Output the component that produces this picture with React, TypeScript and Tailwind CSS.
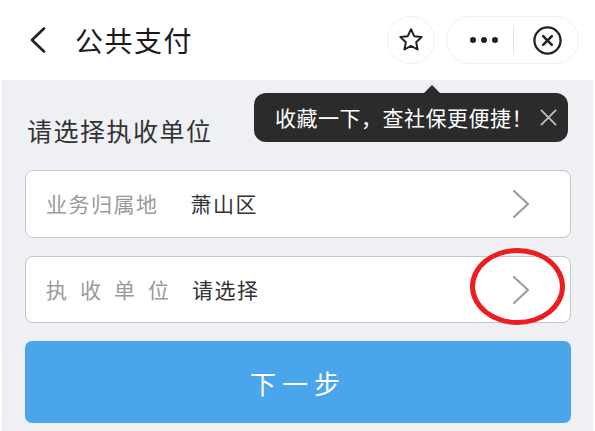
const CJK = "font-['Noto_Sans_CJK_SC','Noto_Sans',sans-serif]";

function Chevron({ className }: { className?: string }) {
  return (
    <svg viewBox="0 0 18 30" className={className} fill="none">
      <polyline points="2,2 16,15 2,28" stroke="currentColor" strokeWidth="2.2" strokeLinecap="round" strokeLinejoin="round" />
    </svg>
  );
}

export default function App() {
  return (
    <div className={`relative w-[595px] h-[431px] bg-white overflow-hidden flex flex-col ${CJK}`}>
      {/* top bar */}
      <header className="h-[80px] flex items-center shrink-0">
        <svg viewBox="0 0 16 26" className="ml-[30px] w-[16px] h-[26px] text-[#222]" fill="none">
          <polyline points="14,1.5 2,13 14,24.5" stroke="currentColor" strokeWidth="2.6" strokeLinecap="round" strokeLinejoin="round" />
        </svg>
        <h1 className="ml-[29px] text-[28px] leading-none text-[#1a1a1a] tracking-[1.5px]">公共支付</h1>

        <div className="ml-auto flex items-center">
          <div className="w-[48px] h-[48px] rounded-full border border-[#f1f1f1] flex items-center justify-center">
            <svg viewBox="0 0 24 24" className="w-[28px] h-[28px]" fill="none">
              <path d="M12 2.8l2.75 5.9 6.35.75-4.7 4.4 1.25 6.3L12 17l-5.65 3.15 1.25-6.3-4.7-4.4 6.35-.75z" stroke="#222" strokeWidth="1.7" strokeLinejoin="round" />
            </svg>
          </div>
          <div className="ml-[11px] mr-[16px] w-[133px] h-[48px] rounded-full border border-[#f1f1f1] flex items-center">
            <div className="ml-[23px] flex gap-[5px]">
              <span className="w-[6px] h-[6px] rounded-full bg-[#222]" />
              <span className="w-[6px] h-[6px] rounded-full bg-[#222]" />
              <span className="w-[6px] h-[6px] rounded-full bg-[#222]" />
            </div>
            <span className="ml-[15px] w-px h-[26px] bg-[#e2e2e2]" />
            <svg viewBox="0 0 32 32" className="ml-[18px] w-[31px] h-[31px]" fill="none">
              <circle cx="16" cy="16" r="13.5" stroke="#222" strokeWidth="2.4" />
              <path d="M11.5 11.5l9 9M20.5 11.5l-9 9" stroke="#222" strokeWidth="2.6" strokeLinecap="round" />
            </svg>
          </div>
        </div>
      </header>

      {/* body */}
      <main className="flex-1 mx-[2px] bg-[#eef0f4] pl-[23px] pr-[22px] pt-[36px] flex flex-col">
        <h2 className="ml-[2px] text-[25px] leading-[28px] text-[#333] tracking-[1.5px]">请选择执收单位</h2>

        <div className="mt-[26px] h-[68px] rounded-[8px] border border-[#c6c6c6] bg-white flex items-center pl-[20px] pr-[40px]">
          <span className="text-[21px] text-[#9a9a9a] tracking-[1.5px]">业务归属地</span>
          <span className="ml-[32px] text-[21px] text-[#333] tracking-[1.5px]">萧山区</span>
          <Chevron className="ml-auto w-[18px] h-[30px] text-[#9d9d9d]" />
        </div>

        <div className="mt-[18px] h-[67px] rounded-[8px] border border-[#c6c6c6] bg-white flex items-center pl-[20px] pr-[40px]">
          <span className="text-[21px] text-[#9a9a9a] tracking-[13px]">执收单位</span>
          <span className="ml-[10px] text-[21px] text-[#333] tracking-[1.5px]">请选择</span>
          <Chevron className="ml-auto w-[18px] h-[30px] text-[#9d9d9d]" />
        </div>

        <button className="mt-[18px] h-[82px] rounded-[7px] bg-[#4aa6ea] text-white text-[26px] tracking-[6px]">下一步</button>
      </main>

      {/* favourite tooltip */}
      <div className="absolute left-[254px] top-[85px]">
        <div className="absolute left-[170px] top-0 w-0 h-0 border-l-[8px] border-r-[8px] border-b-[8px] border-l-transparent border-r-transparent border-b-[#2b2b2b]" />
        <div className="mt-[8px] w-[314px] h-[49px] rounded-[12px] bg-[#2b2b2b] flex items-center pl-[21px] pr-[10px]">
          <span className="text-[21px] text-white tracking-[0.5px] whitespace-nowrap">收藏一下，查社保更便捷！</span>
          <svg viewBox="0 0 20 20" className="ml-auto shrink-0 w-[19px] h-[19px]" fill="none">
            <path d="M2 2l16 16M18 2L2 18" stroke="#bdbdbd" strokeWidth="2" />
          </svg>
        </div>
      </div>

      {/* red annotation */}
      <div className="absolute left-[470px] top-[248px] w-[95px] h-[77px] rounded-[50%] border-[5px] border-[#ee1c1c]" />
    </div>
  );
}
